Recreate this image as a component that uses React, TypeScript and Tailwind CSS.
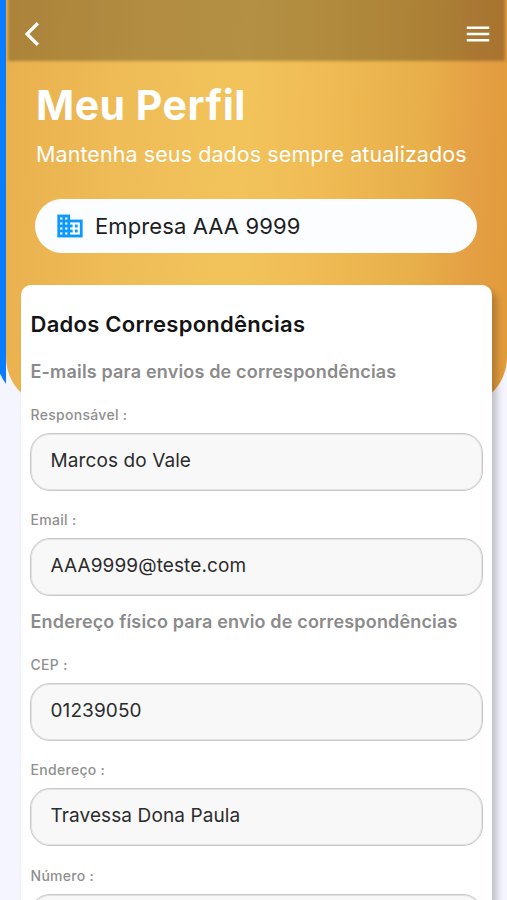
import { MdMenu } from 'react-icons/md';

type FieldProps = {
  label: string;
  value: string;
};

const BackIcon = () => (
  <svg width={28} height={28} viewBox="0 0 24 24" fill="currentColor">
    <path
      stroke="currentColor"
      strokeWidth={0.5}
      d="M17.77 3.77 16 2 6 12l10 10 1.77-1.77L9.54 12z"
    />
  </svg>
);

const CompanyIcon = () => (
  <svg width={30} height={30} viewBox="0 0 24 24" fill="#0d99ff">
    <path
      stroke="#0d99ff"
      strokeWidth={0.25}
      d="M12 7V3H2v18h20V7H12zM6 19H4v-2h2v2zm0-4H4v-2h2v2zm0-4H4V9h2v2zm0-4H4V5h2v2zm4 12H8v-2h2v2zm0-4H8v-2h2v2zm0-4H8V9h2v2zm0-4H8V5h2v2zm10 12h-8v-2h2v-2h-2v-2h2v-2h-2V9h8v10zm-2-8h-2v2h2v-2zm0 4h-2v2h2v-2z"
    />
  </svg>
);

const Field = ({ label, value }: FieldProps) => {
  return (
    <label className="block h-[105.4px]">
      <span className="block h-[35px] pt-[7px] pl-[0.5px] text-[14px] leading-[20px] font-medium tracking-[0.3px] text-[#8f8f8f]">
        {label} :
      </span>
      <input
        readOnly
        defaultValue={value}
        className="block h-[58px] w-full rounded-[20px] border border-[#c9c9c9] bg-[#f8f8f8] px-[19.5px] pb-[3px] text-[19px] tracking-[0.1px] text-[#2c2c2c] shadow-[inset_0_0_0_1px_#e2e2e2] outline-none"
      />
    </label>
  );
};

const SectionTitle = ({ children }: { children: string }) => {
  return (
    <h3 className="h-[39px] pt-px pl-[0.5px] text-[18px] leading-[24px] font-semibold tracking-[0.17px] whitespace-nowrap text-[#8b8b8b]">
      {children}
    </h3>
  );
};

export default function App() {
  return (
    <div className="relative isolate h-[900px] w-full overflow-hidden bg-[#f5f5ff] font-['Inter',sans-serif]">
      {/* previous page still peeking out on the left */}
      <div className="absolute top-0 left-0 -z-20 h-[404px] w-[6px] overflow-hidden">
        <div className="h-[404px] w-[120px] -translate-x-[4px] rounded-bl-[50px] bg-[#0a7cff]" />
      </div>
      <div className="absolute top-0 right-0 left-[6px] -z-10 h-[407px] rounded-b-[50px] bg-[linear-gradient(93deg,#e9b04e_0%,#efbd58_25%,#f2c35b_47%,#f0bb54_62%,#e7ae49_82%,#e5a045_91%,#e19a3a_100%)]" />

      <header className="relative flex h-[60px] items-center justify-between pt-[7px] pr-[14px] pl-[18px] text-white">
        <div className="absolute -top-2 right-[2px] -bottom-px left-[8px] -z-10 bg-black/26 blur-[1.5px]" />
        <BackIcon />
        <MdMenu size={30} />
      </header>

      <section className="px-[36px] pt-[20px] text-white">
        <h1 className="text-[41px] leading-[50px] font-bold tracking-[0.5px]">Meu Perfil</h1>
        <p className="mt-[10px] text-[21.5px] leading-[28px] tracking-[0.08px] whitespace-nowrap">
          Mantenha seus dados sempre atualizados
        </p>
        <div className="mt-[31px] -mr-[6px] -ml-px flex h-[54px] items-center gap-[10px] rounded-full bg-[#fcfdff] pl-[20px] text-[22px] tracking-[0.1px] text-[#1e1e22]">
          <CompanyIcon />
          Empresa AAA 9999
        </div>
      </section>

      <main className="mt-[32px] mr-[15px] ml-[21px] h-[700px] rounded-[10px] bg-white pt-[25px] pr-[9px] pl-[9px] shadow-[5px_6px_7px_rgba(0,0,0,0.22)]">
        <h2 className="h-[49px] pl-[0.5px] text-[22px] leading-[28px] font-semibold tracking-[0.25px] text-[#141414]">
          Dados Correspondências
        </h2>
        <SectionTitle>E-mails para envios de correspondências</SectionTitle>
        <Field label="Responsável" value="Marcos do Vale" />
        <Field label="Email" value="AAA9999@teste.com" />
        <SectionTitle>Endereço físico para envio de correspondências</SectionTitle>
        <Field label="CEP" value="01239050" />
        <Field label="Endereço" value="Travessa Dona Paula" />
        <Field label="Número" value="" />
      </main>
    </div>
  );
}
